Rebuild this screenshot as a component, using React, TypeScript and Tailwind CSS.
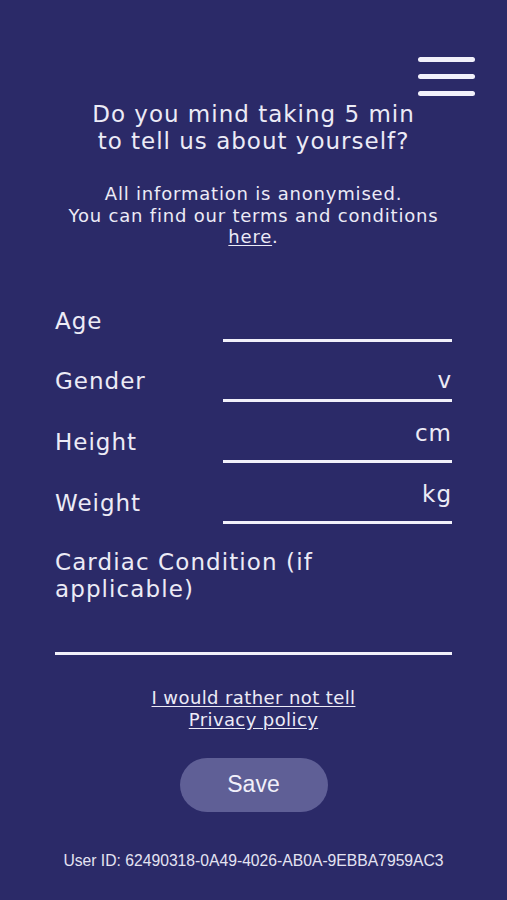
const rows = [
  { label: 'Age', unit: '', h: 'h-[60px]', pad: 'pb-[6px]' },
  { label: 'Gender', unit: 'v', h: 'h-[60px]', pad: 'pb-[6px]' },
  { label: 'Height', unit: 'cm', h: 'h-[61px]', pad: 'pb-[14px]' },
  { label: 'Weight', unit: 'kg', h: 'h-[61px]', pad: 'pb-[14px]' },
]

export default function App() {
  return (
    <div className="min-h-[900px] w-full bg-[#2b2a68] text-[#ecebf6] font-['DejaVu_Sans',sans-serif] flex flex-col">
      {/* Menu */}
      <div className="flex justify-end pt-[57px] pr-[32px]">
        <div className="flex flex-col gap-[12px] w-[57px]">
          <span className="h-[5px] rounded-full bg-[#f1f0fa]" />
          <span className="h-[5px] rounded-full bg-[#f1f0fa]" />
          <span className="h-[5px] rounded-full bg-[#f1f0fa]" />
        </div>
      </div>

      {/* Intro */}
      <h1 className="mt-[5px] text-center text-[23px] leading-[27px] tracking-[1px]">
        Do you mind taking 5 min
        <br />
        to tell us about yourself?
      </h1>
      <p className="mt-[28px] text-center text-[18px] leading-[21.5px] tracking-[0.8px]">
        All information is anonymised.
        <br />
        You can find our terms and conditions
        <br />
        <span className="underline underline-offset-2">here</span>.
      </p>

      {/* Form */}
      <div className="mt-[34px] px-[55px] flex flex-col">
        {rows.map((r) => (
          <div key={r.label} className={`flex ${r.h}`}>
            <div className="w-[168px] flex items-end pb-[8px] text-[23px] leading-[26px] tracking-[1px]">{r.label}</div>
            <div className={`flex-1 flex items-end justify-end border-b-[3px] border-[#f1f0fa] ${r.pad} text-[23px] leading-[26px] tracking-[1px]`}>
              {r.unit}
            </div>
          </div>
        ))}

        <div className="mt-[25px] text-[23px] leading-[27px] tracking-[1.1px]">
          Cardiac Condition (if
          <br />
          applicable)
        </div>
        <div className="mt-[49px] border-b-[3px] border-[#f1f0fa]" />
      </div>

      {/* Links */}
      <div className="mt-[32px] flex flex-col items-center text-[18px] leading-[22px] tracking-[0.4px]">
        <a className="underline underline-offset-2">I would rather not tell</a>
        <a className="underline underline-offset-2">Privacy policy</a>
      </div>

      <div className="mt-[27px] flex justify-center">
        <button className="w-[148px] h-[54px] rounded-full bg-[#5f5f96] text-[23px] text-[#f1f0fa] font-['Liberation_Sans',sans-serif]">
          Save
        </button>
      </div>

      <p className="mt-[37px] text-center text-[15.7px] text-[#e4e3f2] font-['Liberation_Sans',sans-serif]">
        User ID: 62490318-0A49-4026-AB0A-9EBBA7959AC3
      </p>
    </div>
  )
}
